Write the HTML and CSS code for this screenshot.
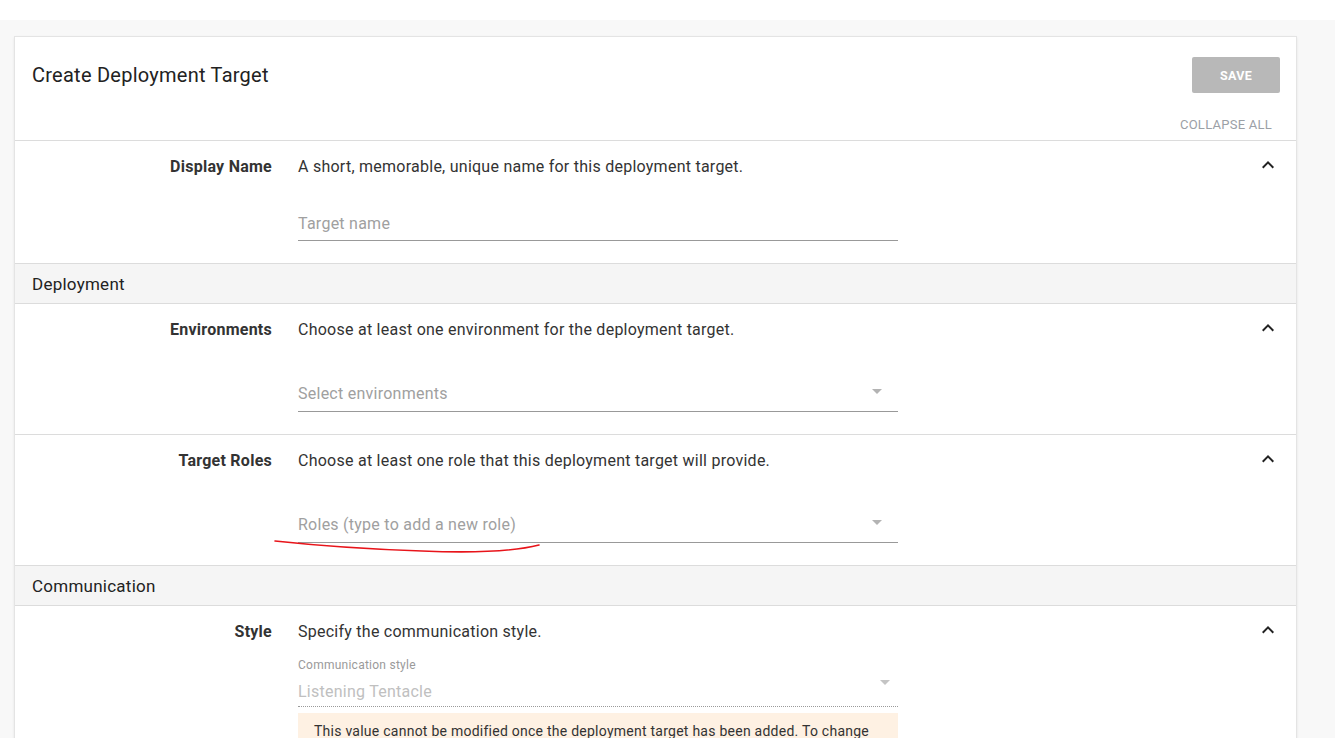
FILE: index.html
```html
<!DOCTYPE html>
<html>
<head>
<meta charset="utf-8">
<link rel="stylesheet" href="styles.css">
</head>
<body>
<div class="topbar"></div>
<div class="page">
  <div class="card">
    <div class="card-head">
      <div class="head-row">
        <h1 class="title">Create Deployment Target</h1>
        <button class="save">SAVE</button>
      </div>
      <div class="collapse-row"><span class="collapse">COLLAPSE ALL</span></div>
    </div>

    <div class="row">
      <div class="label">Display Name</div>
      <div class="content">
        <div class="desc">A short, memorable, unique name for this deployment target.</div>
        <div class="field text-field"><span class="placeholder">Target name</span></div>
      </div>
      <div class="toggle"><svg viewBox="0 0 24 24" width="24" height="24"><path d="M12 8l-6 6 1.41 1.41L12 10.83l4.59 4.58L18 14z" fill="#222"/></svg></div>
    </div>

    <div class="section">Deployment</div>

    <div class="row">
      <div class="label">Environments</div>
      <div class="content">
        <div class="desc">Choose at least one environment for the deployment target.</div>
        <div class="field select-field"><span class="placeholder">Select environments</span><svg class="arrow" viewBox="0 0 24 24" width="24" height="24"><path d="M7 10l5 5 5-5z" fill="#b3b3b3"/></svg></div>
      </div>
      <div class="toggle"><svg viewBox="0 0 24 24" width="24" height="24"><path d="M12 8l-6 6 1.41 1.41L12 10.83l4.59 4.58L18 14z" fill="#222"/></svg></div>
    </div>

    <div class="row roles-row">
      <div class="label">Target Roles</div>
      <div class="content">
        <div class="desc">Choose at least one role that this deployment target will provide.</div>
        <div class="field select-field"><span class="placeholder">Roles (type to add a new role)</span><svg class="arrow" viewBox="0 0 24 24" width="24" height="24"><path d="M7 10l5 5 5-5z" fill="#b3b3b3"/></svg></div>
      </div>
      <div class="toggle"><svg viewBox="0 0 24 24" width="24" height="24"><path d="M12 8l-6 6 1.41 1.41L12 10.83l4.59 4.58L18 14z" fill="#222"/></svg></div>
      <svg class="scribble" viewBox="0 0 280 20" width="280" height="20"><path d="M3 2 C 40 6, 90 10, 150 12 C 200 14, 240 13, 267 6" fill="none" stroke="#e8141a" stroke-width="1.6" stroke-linecap="round"/></svg>
    </div>

    <div class="section">Communication</div>

    <div class="row">
      <div class="label">Style</div>
      <div class="content">
        <div class="desc">Specify the communication style.</div>
        <div class="float-label">Communication style</div>
        <div class="disabled-select"><span class="value">Listening Tentacle</span><svg class="arrow2" viewBox="0 0 24 24" width="24" height="24"><path d="M7 10l5 5 5-5z" fill="#c4c4c4"/></svg></div>
        <div class="warning">This value cannot be modified once the deployment target has been added. To change the communication style, delete this deployment target and create a new one.</div>
      </div>
      <div class="toggle"><svg viewBox="0 0 24 24" width="24" height="24"><path d="M12 8l-6 6 1.41 1.41L12 10.83l4.59 4.58L18 14z" fill="#222"/></svg></div>
    </div>
  </div>
</div>
</body>
</html>
```

FILE: styles.css
```css
html, body {
  margin: 0;
  padding: 0;
  overflow: hidden;
}
body {
  background: #f8f8f8;
  font-family: Roboto, "Liberation Sans", sans-serif;
  color: #333;
  letter-spacing: 0.25px;
}
.topbar {
  height: 20px;
  background: #fff;
}
.page {
  padding: 17px 39px 0 15px;
}
.card {
  background: #fff;
  box-shadow: 0 0 0 1px #e4e4e4, 0 1px 3px rgba(0,0,0,0.18);
}
.card-head {
  padding: 20px 16px 7px 17px;
  border-bottom: 1px solid #dcdcdc;
}
.head-row {
  display: flex;
  align-items: center;
  justify-content: space-between;
  height: 36px;
}
.title {
  margin: 0;
  font-size: 20px;
  font-weight: 400;
  color: #222;
}
.save {
  width: 88px;
  height: 36px;
  border: none;
  border-radius: 2px;
  background: #b8b8b8;
  color: #fff;
  font-family: Roboto, "Liberation Sans", sans-serif;
  font-size: 12.5px;
  font-weight: 700;
  letter-spacing: 0.3px;
  padding: 0;
}
.collapse-row {
  margin-top: 23px;
  text-align: right;
  padding-right: 8px;
  line-height: 16px;
}
.collapse {
  font-size: 13px;
  color: #9ba0a6;
}
.row {
  position: relative;
  display: flex;
  align-items: flex-start;
  padding: 14px 0 22px;
  border-bottom: 1px solid #dcdcdc;
}
.label {
  width: 257px;
  flex: none;
  text-align: right;
  font-size: 16px;
  line-height: 24px;
  font-weight: 700;
  color: #333;
}
.content {
  width: 600px;
  flex: none;
  margin-left: 26px;
}
.desc {
  font-size: 16px;
  line-height: 24px;
  color: #333;
}
.toggle {
  margin-left: auto;
  margin-right: 16px;
  height: 24px;
  width: 24px;
}
.toggle svg {
  display: block;
  margin-top: -2px;
}
.field {
  display: flex;
  align-items: flex-start;
  border-bottom: 1px solid #999;
  margin-top: 13px;
  box-sizing: border-box;
}
.text-field {
  padding-top: 20px;
  height: 49px;
}
.select-field {
  padding-top: 27px;
  height: 57px;
}
.placeholder {
  font-size: 16px;
  line-height: 24px;
  color: #a0a0a0;
}
.arrow {
  display: block;
  margin-left: auto;
  margin-right: 9px;
  margin-top: -3px;
}
.section {
  background: #f5f5f5;
  padding: 8px 17px 7px;
  font-size: 17px;
  line-height: 24px;
  color: #222;
  border-bottom: 1px solid #dcdcdc;
}
.scribble {
  position: absolute;
  left: 257px;
  top: 104px;
}
.float-label {
  margin-top: 13px;
  font-size: 12px;
  line-height: 16px;
  color: #9a9a9a;
}
.disabled-select {
  display: flex;
  align-items: flex-start;
  margin-top: 7px;
  padding-bottom: 2px;
  border-bottom: 1px dotted #9a9a9a;
}
.value {
  font-size: 16px;
  line-height: 24px;
  color: #c0c0c0;
}
.arrow2 {
  display: block;
  margin-left: auto;
  margin-right: 1px;
  margin-top: -10px;
}
.warning {
  margin-top: 6px;
  background: #fef1e3;
  padding: 8px 16px;
  font-size: 14px;
  line-height: 20px;
  color: #333;
}
```
